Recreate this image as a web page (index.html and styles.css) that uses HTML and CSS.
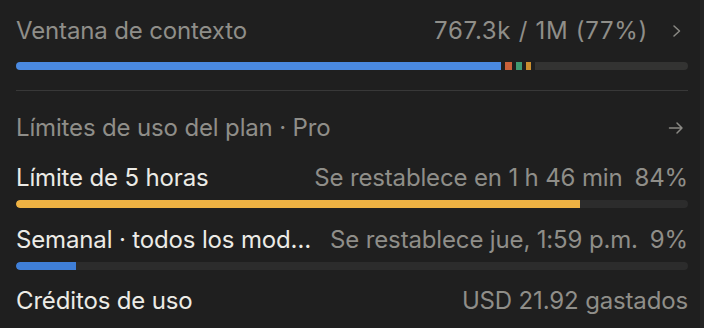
FILE: index.html
```html
<!DOCTYPE html>
<html lang="es">
<head>
<meta charset="utf-8">
<link rel="stylesheet" href="styles.css">
</head>
<body>
<div class="panel">
  <div class="row row-ctx muted">
    <span class="label">Ventana de contexto</span>
    <span class="right"><span class="ctxval">767.3k / 1M (77%)</span>
      <svg class="chev" width="10" height="14" viewBox="0 0 10 14"><path d="M2 2 L7.5 7 L2 12" fill="none" stroke="currentColor" stroke-width="1.5" stroke-linecap="round" stroke-linejoin="round"/></svg>
    </span>
  </div>
  <div class="ctxbar">
    <div class="seg blue" style="width:485px"></div>
    <div class="seg orange"></div>
    <div class="seg green"></div>
    <div class="seg amber"></div>
    <div class="seg rest"></div>
  </div>
  <div class="divider"></div>
  <div class="row row-plan muted">
    <span class="label">Límites de uso del plan · Pro</span>
    <svg class="arrow" width="16" height="14" viewBox="0 0 16 14"><path d="M1.5 7 H14 M9 2 L14 7 L9 12" fill="none" stroke="currentColor" stroke-width="1.5" stroke-linecap="round" stroke-linejoin="round"/></svg>
  </div>
  <div class="row row-5h">
    <span class="label strong">Límite de 5 horas</span>
    <span class="right muted">Se restablece en 1 h 46 min<span class="pct">84%</span></span>
  </div>
  <div class="bar"><div class="fill yellow" style="width:564px"></div></div>
  <div class="row row-week">
    <span class="label strong ellip">Semanal · todos los mod…</span>
    <span class="right muted">Se restablece jue, 1:59 p.m.<span class="pct">9%</span></span>
  </div>
  <div class="bar"><div class="fill bluef" style="width:60px"></div></div>
  <div class="row row-cred">
    <span class="label strong">Créditos de uso</span>
    <span class="right muted">USD 21.92 gastados</span>
  </div>
</div>
</body>
</html>
```
FILE: styles.css
```css
html, body {
  margin: 0;
  padding: 0;
  background: #1f1f1f;
  width: 704px;
  height: 328px;
  overflow: hidden;
}
body {
  font-family: "Inter", "Noto Sans", sans-serif;
  font-size: 24px;
  letter-spacing: -0.15px;
  color: #ecebe6;
  border-right: 4px solid #242424;
  box-sizing: border-box;
}
.panel {
  padding: 16px 12px 0 16px;
  display: flex;
  flex-direction: column;
}
.row {
  display: flex;
  justify-content: space-between;
  align-items: center;
  height: 30px;
  line-height: 30px;
  white-space: nowrap;
}
.muted { color: #8f8e89; }
.strong { color: #ecebe6; }
.right { display: flex; align-items: center; }
.ctxval { letter-spacing: 0.7px; }
.pct { margin-left: 12px; }
.chev { margin-left: 24px; margin-right: 6px; color: #8a8984; }
.arrow { margin-right: 4px; color: #8a8984; }

.ctxbar {
  margin-top: 16px;
  height: 8px;
  display: flex;
  gap: 4px;
}
.seg { height: 8px; }
.blue { background: #4a89e0; border-radius: 4px 0 0 4px; }
.orange { width: 7px; background: #c9603a; }
.green { width: 6px; background: #3f9a72; }
.amber { width: 5px; background: #c98e2f; }
.rest { flex: 1; background: #333332; border-radius: 0 4px 4px 0; }

.divider {
  margin-top: 20px;
  height: 1px;
  background: #383838;
}
.row-plan { margin-top: 22px; }
.row-5h { margin-top: 20px; }
.row-week { margin-top: 17px; }
.row-cred { margin-top: 16px; }

.bar {
  margin-top: 7px;
  height: 8px;
  border-radius: 4px;
  background: #2c2c2c;
  overflow: hidden;
}
.fill { height: 100%; border-radius: 4px 0 0 4px; }
.yellow { background: #eeb243; }
.bluef { background: #3f7fd8; }
```
